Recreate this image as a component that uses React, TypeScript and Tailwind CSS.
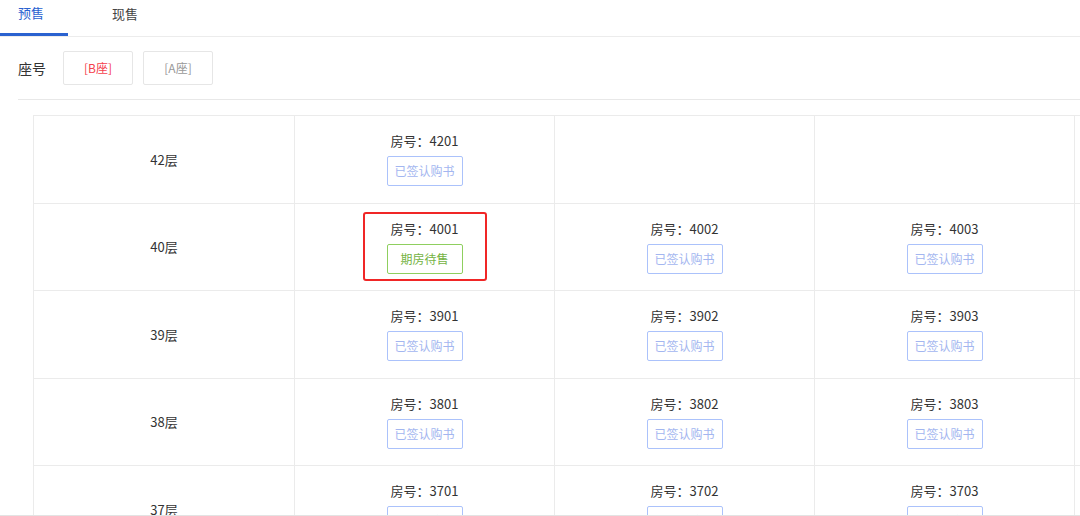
import React from "react";

type Room = { no: string; status: "signed" | "pending" } | null;

const floors: { floor: string; rooms: Room[] }[] = [
  { floor: "42层", rooms: [{ no: "4201", status: "signed" }, null, null, null] },
  {
    floor: "40层",
    rooms: [
      { no: "4001", status: "pending" },
      { no: "4002", status: "signed" },
      { no: "4003", status: "signed" },
      null,
    ],
  },
  {
    floor: "39层",
    rooms: [
      { no: "3901", status: "signed" },
      { no: "3902", status: "signed" },
      { no: "3903", status: "signed" },
      null,
    ],
  },
  {
    floor: "38层",
    rooms: [
      { no: "3801", status: "signed" },
      { no: "3802", status: "signed" },
      { no: "3803", status: "signed" },
      null,
    ],
  },
  {
    floor: "37层",
    rooms: [
      { no: "3701", status: "signed" },
      { no: "3702", status: "signed" },
      { no: "3703", status: "signed" },
      null,
    ],
  },
];

const RoomCell = ({ room }: { room: Room }) => {
  if (!room) return <div className="border-l border-[#ebebeb]" />;

  const content = (
    <div className="flex flex-col items-center gap-[6px]">
      <span className="h-[18px] leading-[18px] text-[13px] text-[#333]">
        房号：{room.no}
      </span>
      {room.status === "pending" ? (
        <span className="w-[76px] h-[30px] flex items-center justify-center border border-[#8fcf5f] rounded-[2px] text-[12px] text-[#75b343]">
          期房待售
        </span>
      ) : (
        <span className="w-[76px] h-[30px] flex items-center justify-center border border-[#abc2fb] rounded-[2px] text-[12px] text-[#a3b6f0]">
          已签认购书
        </span>
      )}
    </div>
  );

  return (
    <div className="border-l border-[#ebebeb] flex items-center justify-center">
      {room.status === "pending" ? (
        <div className="w-[124px] h-[69px] flex items-center justify-center border-2 border-[#f02626] rounded-[3px]">
          {content}
        </div>
      ) : (
        content
      )}
    </div>
  );
};

export default function App() {
  return (
    <div
      className="w-[1080px] h-[516px] overflow-hidden bg-white flex flex-col border-b border-[#e3e3e3]"
      style={{ fontFamily: '"Noto Sans CJK SC", "Liberation Sans", sans-serif' }}
    >
      {/* Tabs */}
      <div className="flex h-[37px] border-b border-[#ececec] shrink-0">
        <div className="w-[68px] flex flex-col">
          <span className="flex-1 flex items-center pl-[18px] pb-[8px] text-[13px] text-[#2a62d0]">
            预售
          </span>
          <span className="h-[3px] bg-[#2a62d0]" />
        </div>
        <span className="pl-[44px] pt-[4px] text-[13px] text-[#444]">现售</span>
      </div>

      {/* Seat selector */}
      <div className="ml-[18px] h-[63px] flex items-center gap-[10px] border-b border-[#e8e8e8] shrink-0">
        <span className="text-[14px] text-[#333] mr-[7px]">座号</span>
        <span className="w-[70px] h-[34px] flex items-center justify-center border border-[#e6e6e6] rounded-[2px] text-[12px] text-[#f5414d]">
          [B座]
        </span>
        <span className="w-[70px] h-[34px] flex items-center justify-center border border-[#e6e6e6] rounded-[2px] text-[12px] text-[#999]">
          [A座]
        </span>
      </div>

      {/* Floor table */}
      <div className="ml-[33px] mt-[15px] border-t border-[#ebebeb] w-[1300px]">
        {floors.map((f) => (
          <div
            key={f.floor}
            className="grid grid-cols-[260px_260px_260px_260px_260px] h-[87.5px] border-b border-[#ebebeb] border-l"
          >
            <div className="flex items-center justify-center text-[13px] text-[#333]">
              {f.floor}
            </div>
            {f.rooms.map((r, i) => (
              <RoomCell key={i} room={r} />
            ))}
          </div>
        ))}
      </div>
    </div>
  );
}
